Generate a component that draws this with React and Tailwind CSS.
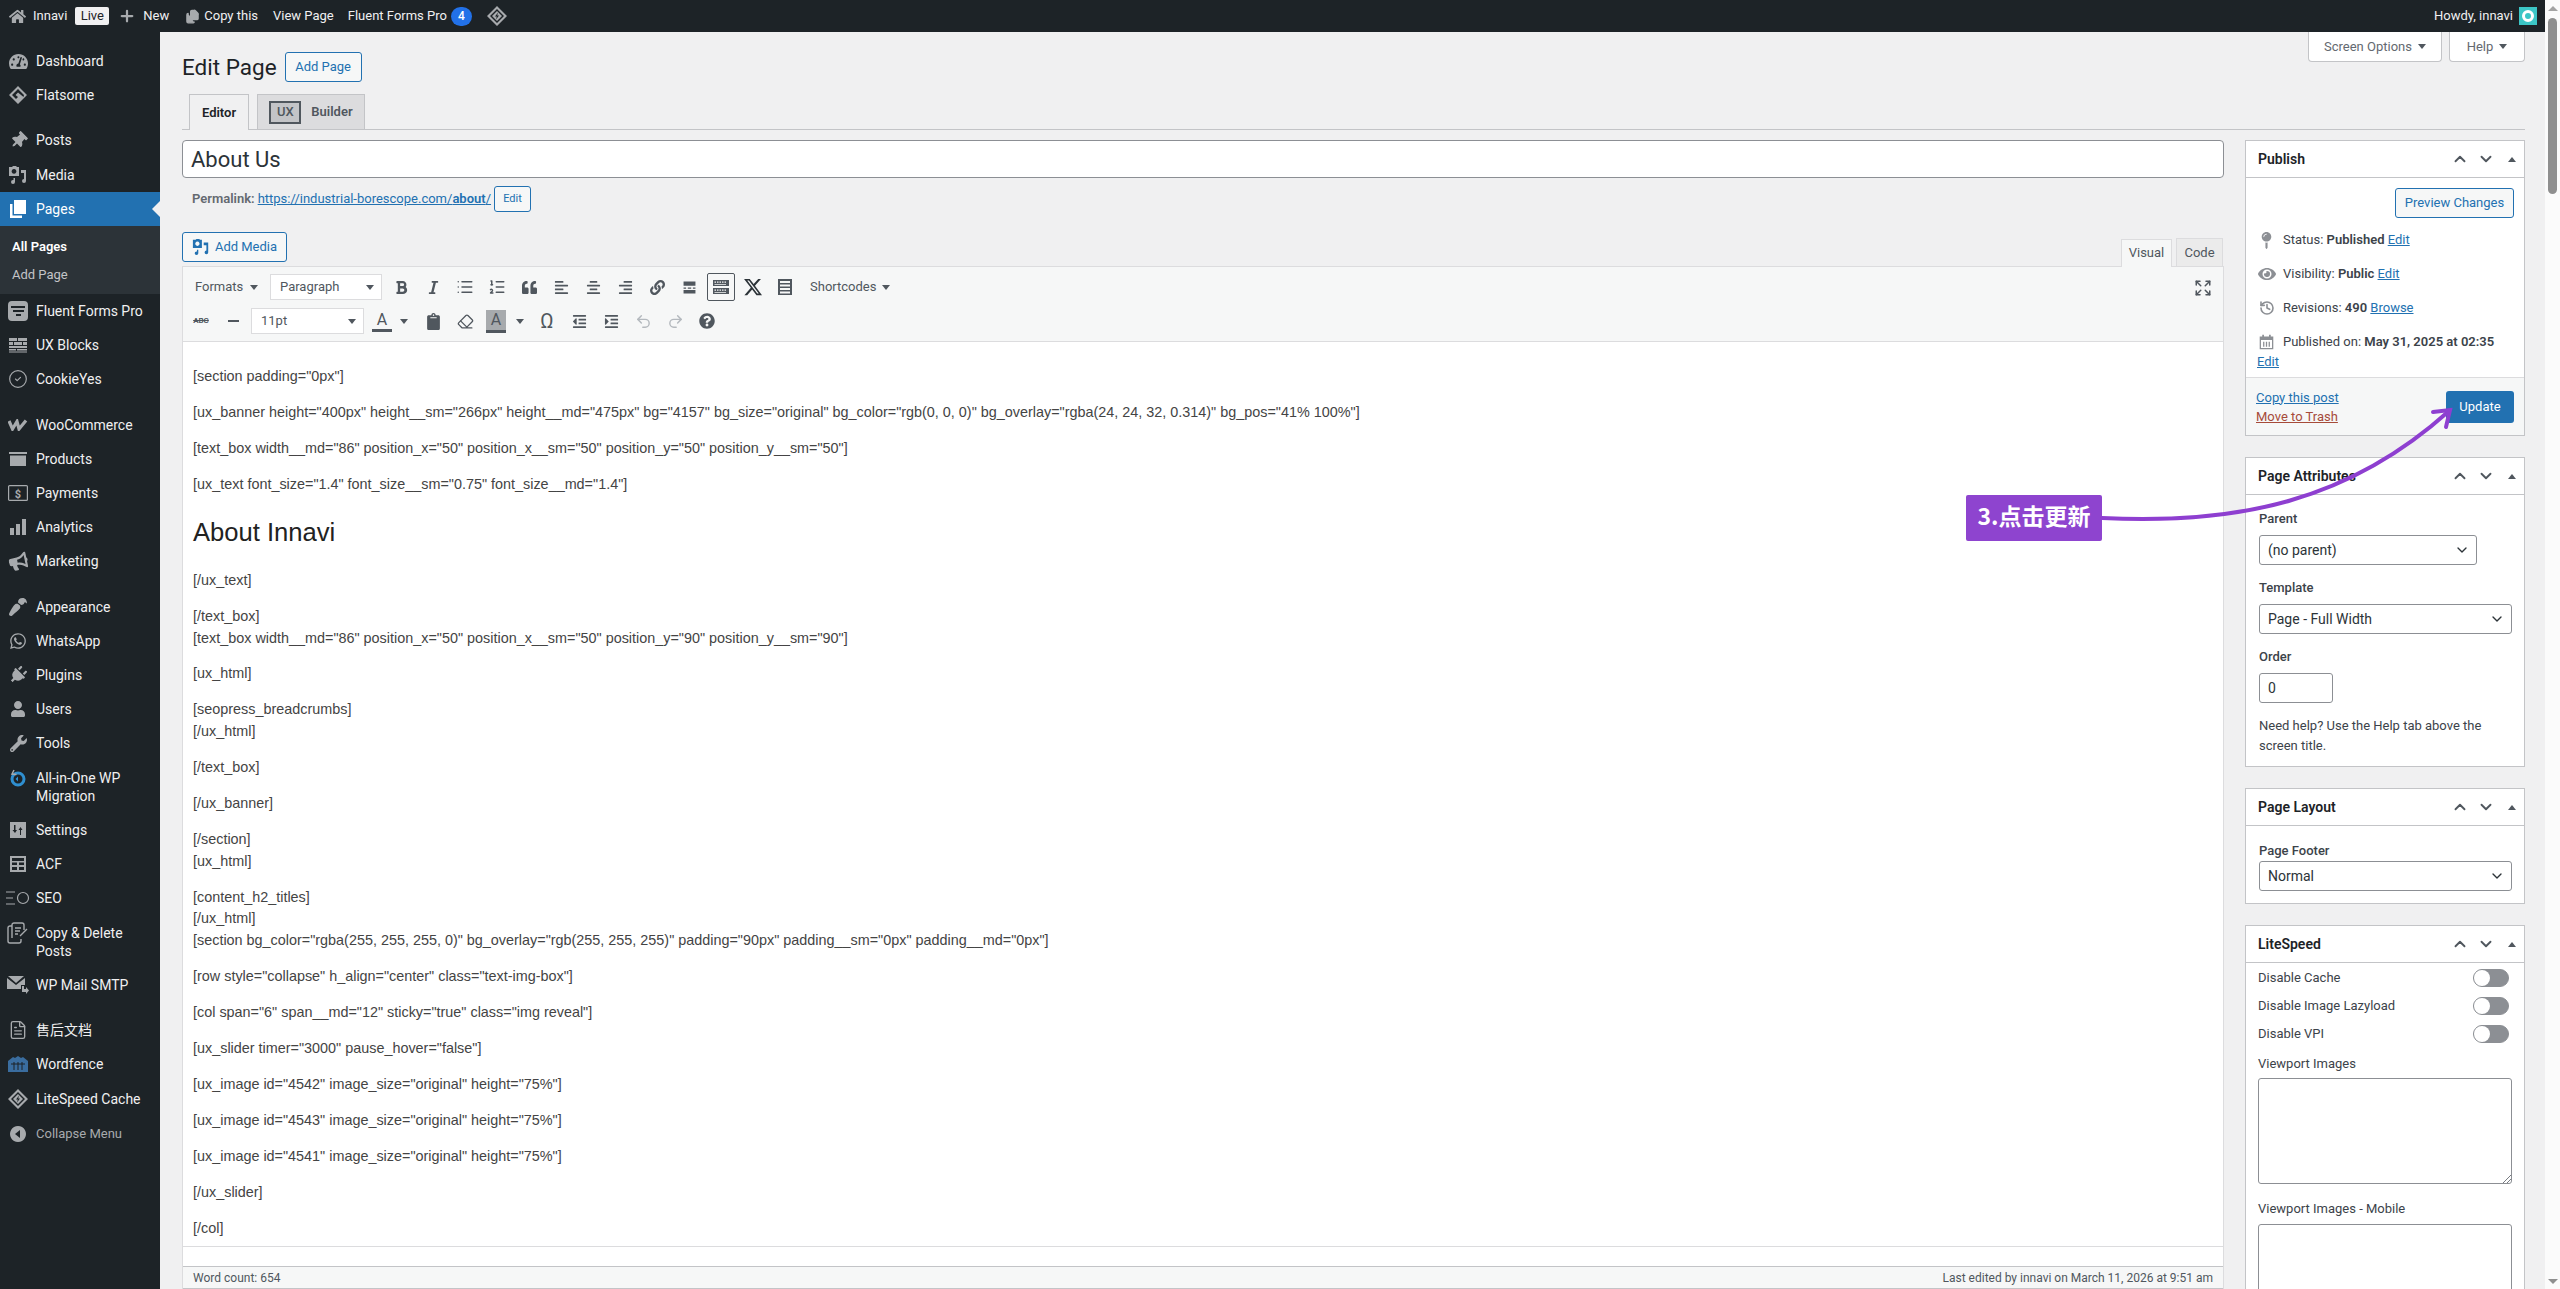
import {
  ChevronDown,
  ChevronUp,
  CircleCheck,
  Eraser,
  Expand,
  FileText,
  Files,
  History,
  List,
  ListOrdered,
  Plus,
  Redo2,
  Undo2,
} from "lucide-react";
import {
  FaAlignCenter,
  FaAlignLeft,
  FaAlignRight,
  FaBold,
  FaBullhorn,
  FaClipboard,
  FaEye,
  FaHome,
  FaIndent,
  FaItalic,
  FaLink,
  FaMapPin,
  FaOutdent,
  FaPaintBrush,
  FaPlug,
  FaQuestionCircle,
  FaQuoteLeft,
  FaTachometerAlt,
  FaThumbtack,
  FaUser,
  FaWhatsapp,
  FaWrench,
} from "react-icons/fa";
import { FaXTwitter } from "react-icons/fa6";

const sans = "font-['Roboto','Noto_Sans_CJK_SC',sans-serif]";

// sidebar icons drawn by hand, the wp dashicons are not in the packages
function Svg({ children, className = "w-5 h-5" }) {
  return (
    <svg viewBox="0 0 20 20" className={className} fill="currentColor">
      {children}
    </svg>
  );
}

const DiamondIcon = () => (
  <Svg>
    <path d="M10 1 19 10 10 19 1 10Z M10 4 4 10 8 14 10 12 7.5 10 10 7.5 15.5 12 16 10Z" fillRule="evenodd" />
  </Svg>
);
const MediaIcon = ({ className }) => (
  <Svg className={className}>
    <path
      d="M1 2h3l1-1h3l1 1h2v9H1Z M6 4a2.4 2.4 0 1 0 .01 0Z M13 5h5v11a2 2 0 1 1-2-2V8h-3Z M7 13v4a2 2 0 1 1-2-2h.5v-2Z"
      fillRule="evenodd"
    />
  </Svg>
);
const PagesIcon = () => (
  <Svg>
    <path d="M6 1h12v14H6Z" />
    <path d="M2 5h2.5v11.5H14V19H2Z" />
  </Svg>
);
const FluentIcon = () => (
  <Svg>
    <path
      d="M4 0h12a4 4 0 0 1 4 4v12a4 4 0 0 1-4 4H4a4 4 0 0 1-4-4V4a4 4 0 0 1 4-4Z M3 5v2h14V5Z M5 9v2h11V9Z M8 13v2h5v-2Z"
      fillRule="evenodd"
    />
  </Svg>
);
const BlocksIcon = () => (
  <Svg>
    <path d="M1 3h8v3H1Z M10 3h9v3h-9Z M1 7h4v3H1Z M6 7h8v3H6Z M15 7h4v3h-4Z M1 11h18v2H1Z M1 14h7v1.5H1Z M9 14h10v1.5H9Z M1 16.5h18v1H1Z" />
  </Svg>
);
const CookieIcon = () => <CircleCheck className="w-5 h-5" strokeWidth={1.4} />;
const WooIcon = () => (
  <svg viewBox="0 0 20 12" className="w-5 h-3" fill="none" stroke="currentColor" strokeWidth="3.2">
    <path d="M1 2 4.5 10 9 2.5 11 10 18 1.5" />
  </svg>
);
const ProductsIcon = () => (
  <Svg>
    <path d="M1 3h18v2H1Z M2 6.5h16V17H2Z" />
  </Svg>
);
const PaymentsIcon = () => (
  <svg viewBox="0 0 20 16" className="w-5 h-4" fill="none" stroke="currentColor" strokeWidth="1.2">
    <rect x="0.6" y="0.6" width="18.8" height="14.8" rx="1" />
    <text x="10" y="12.5" textAnchor="middle" fontSize="11" fontWeight="700" fill="currentColor" stroke="none">
      $
    </text>
  </svg>
);
const AnalyticsIcon = () => (
  <Svg>
    <path d="M2 11h4v7H2Z M8 7h4v11H8Z M14 2h4v16h-4Z" />
  </Svg>
);
const SettingsIcon = () => (
  <Svg>
    <path
      d="M2 2h16v16H2Z M6 5v5H4.5L7 13l2-3H7.5V5Z M13 15v-5h1.5L12.500 7 10.500 10H12v5Z"
      fillRule="evenodd"
    />
  </Svg>
);
const AcfIcon = () => (
  <Svg>
    <path
      d="M2 2h16v16H2Z M4 4v3h12V4Z M4 8.500v2.500h5V8.500Z M11 8.500v2.500h5V8.500Z M4 13v3h5v-3Z M11 13v3h5v-3Z"
      fillRule="evenodd"
    />
  </Svg>
);
const SeoIcon = () => (
  <svg viewBox="0 0 24 14" className="w-6 h-[14px]" fill="none" stroke="currentColor" strokeWidth="1.2">
    <path d="M0 1h9 M0 7h7 M0 13h9" />
    <circle cx="17" cy="7" r="5.500" />
  </svg>
);
const CopyPostsIcon = () => (
  <svg viewBox="0 0 22 22" className="w-[22px] h-[22px]" fill="none" stroke="currentColor" strokeWidth="1.400">
    <path d="M5 16V3a2 2 0 0 1 2-2h8a2 2 0 0 1 2 2v5" />
    <path d="M5 4H3a2 2 0 0 0-2 2v13a2 2 0 0 0 2 2h9a2 2 0 0 0 2-2v-2" />
    <path d="M8 6h6 M8 9h5 M8 12h3 M13 14l7-7" />
  </svg>
);
const MailIcon = () => (
  <svg viewBox="0 0 22 20" className="w-[22px] h-5" fill="currentColor">
    <path d="M1 1h16L9 8Z M0 3l9 7 9-7v7h-4v4H0Z" />
    <path d="M15 11h2v3h2v-2l3 3.500-3 3.500v-2h-4Z" />
  </svg>
);
const DocIcon = () => <FileText className="w-5 h-5" strokeWidth={1.6} />;
const WordfenceIcon = () => (
  <svg viewBox="0 0 20 16" className="w-5 h-4" fill="#3a6d9f">
    <path d="M0 5 5 1 7 2 10 0 13 2 15 1 20 5V16H0Z" />
    <path d="M3 8h14M6 6v8M10 6v8M14 6v8" stroke="#1d2327" strokeWidth="1" />
  </svg>
);
const LiteIcon = ({ className }) => (
  <Svg className={className}>
    <path d="M10 0 20 10 10 20 0 10Z M10 3 3 10 10 17 17 10Z" fillRule="evenodd" />
    <path d="M10 5 15 10 10 15 5 10Z M11 6.500 8 10.500h1.800L9 13.500 12 9.500h-1.800Z" fillRule="evenodd" />
  </Svg>
);
const MigrationIcon = () => (
  <svg viewBox="0 0 20 20" className="w-5 h-5" fill="none" strokeWidth="3">
    <circle cx="10" cy="11" r="6" stroke="#2f8fd0" />
    <path d="M6 2 4 6 8.500 6.500" stroke="#a7aaad" strokeWidth="1.500" />
    <path d="M10 8.500 7.500 11 10 13.500Z" fill="#2f8fd0" stroke="none" />
  </svg>
);
const CollapseIcon = () => (
  <Svg>
    <path d="M10 2a8 8 0 1 0 .01 0Z M12 6 7 10 12 14Z" fillRule="evenodd" />
  </Svg>
);

const menu = [
  { label: "Dashboard", icon: <FaTachometerAlt className="w-[19px] h-[19px]" /> },
  { label: "Flatsome", icon: <DiamondIcon /> },
  { gap: true },
  { label: "Posts", icon: <FaThumbtack className="w-[17px] h-[17px] rotate-45" /> },
  { label: "Media", icon: <MediaIcon /> },
  { label: "Pages", icon: <PagesIcon />, active: true },
  { label: "Fluent Forms Pro", icon: <FluentIcon /> },
  { label: "UX Blocks", icon: <BlocksIcon /> },
  { label: "CookieYes", icon: <CookieIcon /> },
  { gap: true },
  { label: "WooCommerce", icon: <WooIcon /> },
  { label: "Products", icon: <ProductsIcon /> },
  { label: "Payments", icon: <PaymentsIcon /> },
  { label: "Analytics", icon: <AnalyticsIcon /> },
  { label: "Marketing", icon: <FaBullhorn className="w-[19px] h-[19px] -rotate-12" /> },
  { gap: true },
  { label: "Appearance", icon: <FaPaintBrush className="w-[18px] h-[18px] rotate-180" /> },
  { label: "WhatsApp", icon: <FaWhatsapp className="w-[18px] h-[18px]" /> },
  { label: "Plugins", icon: <FaPlug className="w-[18px] h-[18px] rotate-45" /> },
  { label: "Users", icon: <FaUser className="w-4 h-4" /> },
  { label: "Tools", icon: <FaWrench className="w-[17px] h-[17px]" /> },
  { label: "All-in-One WP Migration", icon: <MigrationIcon /> },
  { label: "Settings", icon: <SettingsIcon /> },
  { label: "ACF", icon: <AcfIcon /> },
  { label: "SEO", icon: <SeoIcon /> },
  { label: "Copy & Delete Posts", icon: <CopyPostsIcon /> },
  { label: "WP Mail SMTP", icon: <MailIcon /> },
  { gap: true },
  { label: "售后文档", icon: <DocIcon /> },
  { label: "Wordfence", icon: <WordfenceIcon /> },
  { label: "LiteSpeed Cache", icon: <LiteIcon /> },
];

const lines = [
  ['[section padding="0px"]'],
  ['[ux_banner height="400px" height__sm="266px" height__md="475px" bg="4157" bg_size="original" bg_color="rgb(0, 0, 0)" bg_overlay="rgba(24, 24, 32, 0.314)" bg_pos="41% 100%"]'],
  ['[text_box width__md="86" position_x="50" position_x__sm="50" position_y="50" position_y__sm="50"]'],
  ['[ux_text font_size="1.4" font_size__sm="0.75" font_size__md="1.4"]'],
  "h2",
  ["[/ux_text]"],
  ["[/text_box]", '[text_box width__md="86" position_x="50" position_x__sm="50" position_y="90" position_y__sm="90"]'],
  ["[ux_html]"],
  ["[seopress_breadcrumbs]", "[/ux_html]"],
  ["[/text_box]"],
  ["[/ux_banner]"],
  ["[/section]", "[ux_html]"],
  ["[content_h2_titles]", "[/ux_html]", '[section bg_color="rgba(255, 255, 255, 0)" bg_overlay="rgb(255, 255, 255)" padding="90px" padding__sm="0px" padding__md="0px"]'],
  ['[row style="collapse" h_align="center" class="text-img-box"]'],
  ['[col span="6" span__md="12" sticky="true" class="img reveal"]'],
  ['[ux_slider timer="3000" pause_hover="false"]'],
  ['[ux_image id="4542" image_size="original" height="75%"]'],
  ['[ux_image id="4543" image_size="original" height="75%"]'],
  ['[ux_image id="4541" image_size="original" height="75%"]'],
  ["[/ux_slider]"],
  ["[/col]"],
];

function MenuItem({ item }) {
  if (item.gap) return <div className="h-[11px]" />;
  const colors = item.active ? "bg-[#2271b1] text-white" : "text-[#f0f0f1]";
  return (
    <div className={`relative flex items-start py-2 text-[14px] leading-[18.2px] ${colors}`}>
      <span className={`w-9 h-[18px] flex items-center justify-center shrink-0 ${item.active ? "text-white" : "text-[#a7aaad]"}`}>
        {item.icon}
      </span>
      <span className="pr-2">{item.label}</span>
      {item.active && (
        <span className="absolute right-0 top-[9px] w-0 h-0 border-y-[8px] border-y-transparent border-r-[8px] border-r-[#f0f0f1]" />
      )}
    </div>
  );
}

function Sidebar() {
  return (
    <div className="w-40 shrink-0 bg-[#1d2327] pt-3">
      {menu.map((item, i) => (
        <div key={i}>
          <MenuItem item={item} />
          {item.active && (
            <div className="bg-[#2c3338] h-[68px] pl-3 pt-[12px] text-[13px] leading-[28px]">
              <div className="font-semibold text-white leading-[18px] mb-[10px]">All Pages</div>
              <div className="text-[#c3c4c7] leading-[18px]">Add Page</div>
            </div>
          )}
        </div>
      ))}
      <div className="flex items-center py-2 text-[13px] leading-[18px] text-[#a7aaad]">
        <span className="w-9 flex justify-center">
          <CollapseIcon />
        </span>
        Collapse Menu
      </div>
    </div>
  );
}

function TopBar() {
  return (
    <div className="h-8 bg-[#1d2327] text-[#f0f0f1] text-[13px] flex items-center shrink-0">
      <FaHome className="ml-[9px] w-[17px] h-[17px] text-[#a7aaad]" />
      <span className="ml-[7px]">Innavi</span>
      <span className="ml-2 h-[18px] w-[34px] rounded-[2px] bg-[#f0f0f1] text-[#1d2327] flex items-center justify-center">Live</span>
      <Plus className="ml-[9px] w-[18px] h-[18px] text-[#a7aaad]" strokeWidth={3} />
      <span className="ml-[7px]">New</span>
      <Files className="ml-4 w-[15px] h-[15px] text-[#a7aaad]" fill="currentColor" />
      <span className="ml-[4px]">Copy this</span>
      <span className="ml-[15px]">View Page</span>
      <span className="ml-[14px]">Fluent Forms Pro</span>
      <span className="ml-1 w-[21px] h-[19px] rounded-full bg-[#2271e8] text-white text-[12px] font-medium flex items-center justify-center">4</span>
      <span className="ml-[15px] text-[#a7aaad]">
        <LiteIcon />
      </span>
      <span className="ml-auto">Howdy, innavi</span>
      <span className="ml-[6px] mr-2 w-[18px] h-[18px] bg-[#3cc6c6] flex items-center justify-center">
        <span className="w-[12px] h-[12px] rounded-full border-[3px] border-white" />
      </span>
    </div>
  );
}

function Caret({ className = "" }) {
  return <span className={`inline-block w-0 h-0 border-x-[4px] border-x-transparent border-t-[5px] border-t-[#50575e] ${className}`} />;
}

function TB({ children, active }) {
  return (
    <span className="w-8 h-7 shrink-0 flex items-center justify-center text-[#50575e]">
      {active ? <span className="w-7 h-7 border border-[#50575e] rounded-[2px] flex items-center justify-center">{children}</span> : children}
    </span>
  );
}

function ToolSelect({ label, w }) {
  return (
    <span className={`${w} h-[26px] shrink-0 bg-white border border-[#dcdcde] flex items-center justify-between pl-[9px] pr-[7px] text-[#50575e] text-[13px]`}>
      {label}
      <Caret />
    </span>
  );
}

function Toolbar() {
  const ic = "w-[15px] h-[15px]";
  return (
    <div className="h-[75px] pt-[7px] bg-[#f6f7f7] border-b border-[#dcdcde] relative text-[13px] text-[#50575e] shrink-0">
      <div className="flex items-center h-[26px] pl-3">
        <span className="w-[75px] flex items-center shrink-0">
          Formats
          <Caret className="ml-[7px]" />
        </span>
        <ToolSelect label="Paragraph" w="w-[112px]" />
        <span className="w-[3px]" />
        <TB><FaBold className="w-[13px] h-[15px]" /></TB>
        <TB><FaItalic className="w-[13px] h-[15px]" /></TB>
        <TB><List className="w-[18px] h-[18px]" strokeWidth={2} /></TB>
        <TB><ListOrdered className="w-[18px] h-[18px]" strokeWidth={2} /></TB>
        <TB><FaQuoteLeft className={ic} /></TB>
        <TB><FaAlignLeft className={ic} /></TB>
        <TB><FaAlignCenter className={ic} /></TB>
        <TB><FaAlignRight className={ic} /></TB>
        <TB><FaLink className={ic} /></TB>
        <TB>
          <Svg className="w-[17px] h-[17px]">
            <path d="M3 3h14v5H3Z M3 10h3v1.500H3Z M8 10h4v1.500H8Z M14 10h3v1.500h-3Z M3 13h14v4H3Z" />
          </Svg>
        </TB>
        <TB active>
          <Svg className="w-[20px] h-[20px]">
            <path
              d="M2 3h16v6H2Z M3.500 4.500v1.200h1.500V4.500Z M6 4.500v1.200h1.500V4.500Z M8.500 4.500v1.200H10V4.500Z M11 4.500v1.200h1.500V4.500Z M13.500 4.500v1.200H15V4.500Z M3.500 7v.8H15V7Z M2 11h16v6H2Z M3.500 12.500v1.200h1.500V12.500Z M6 12.500v1.200h1.500V12.500Z M8.500 12.500v1.200H10V12.500Z M11 12.500v1.200h1.500V12.500Z M13.500 12.500v1.200H15V12.500Z M3.500 15v.8H15V15Z"
              fillRule="evenodd"
            />
          </Svg>
        </TB>
        <TB><FaXTwitter className="w-[20px] h-[20px] text-[#2c3338]" /></TB>
        <TB>
          <Svg className="w-5 h-5">
            <path d="M3 2h14v16H3Z M5 4v2h10V4Z M5 7.500v2h10v-2Z M5 11v2h10v-2Z M5 14.500v2h10v-2Z" fillRule="evenodd" />
          </Svg>
        </TB>
        <span className="ml-[9px] flex items-center">
          Shortcodes
          <Caret className="ml-[6px]" />
        </span>
      </div>
      <div className="flex items-center h-[26px] mt-2 pl-[2px]">
        <TB><span className="text-[8px] font-bold line-through">ABC</span></TB>
        <TB><span className="w-[11px] h-[2px] bg-[#50575e]" /></TB>
        <span className="w-[2px]" />
        <ToolSelect label="11pt" w="w-[113px]" />
        <span className="w-[2px]" />
        <span className="w-[51px] flex items-center shrink-0">
          <span className="ml-[6px] w-5 text-[16px] leading-[19px] text-center border-b-[3px] border-[#50575e]">A</span>
          <Caret className="ml-[8px]" />
        </span>
        <TB><FaClipboard className="w-[15px] h-[17px]" /></TB>
        <TB><Eraser className="w-[17px] h-[17px]" strokeWidth={1.8} /></TB>
        <span className="w-[50px] flex items-center shrink-0">
          <span className="ml-[5px] w-5 text-[16px] leading-[20px] text-center bg-[#a7aaad] border-b-[3px] border-[#50575e]">A</span>
          <Caret className="ml-[10px]" />
        </span>
        <TB><span className="text-[20px] leading-none">Ω</span></TB>
        <TB><FaOutdent className={ic} /></TB>
        <TB><FaIndent className={ic} /></TB>
        <TB><Undo2 className="w-[17px] h-[17px] text-[#b4b9be]" /></TB>
        <TB><Redo2 className="w-[17px] h-[17px] text-[#b4b9be]" /></TB>
        <TB><FaQuestionCircle className="w-4 h-4" /></TB>
      </div>
      <Expand className="absolute right-[11px] top-[12px] w-[18px] h-[18px]" strokeWidth={2} />
    </div>
  );
}

function EditorContent() {
  return (
    <div className="h-[904px] overflow-hidden bg-white px-[10px] pt-6 font-['Liberation_Sans',sans-serif] text-[14.4px] leading-[21.6px] text-[#444]">
      {lines.map((l, i) =>
        l === "h2" ? (
          <h2 key={i} className="text-[25.6px] leading-[45.6px] text-[#222] mb-[14.4px]">About Innavi</h2>
        ) : (
          <p key={i} className="mb-[14.4px]">
            {l.map((t, j) => (
              <span key={j} className="block">{t}</span>
            ))}
          </p>
        )
      )}
    </div>
  );
}

function MetaBox({ title, children, className = "" }) {
  return (
    <div className={`bg-white border border-[#c3c4c7] mb-[21px] ${className}`}>
      <div className="h-[37px] border-b border-[#c3c4c7] flex items-center pl-3 text-[14px] font-semibold text-[#1d2327]">
        {title}
        <ChevronUp className="ml-auto w-[18px] h-[18px] text-[#50575e]" strokeWidth={2.500} />
        <ChevronDown className="ml-2 w-[18px] h-[18px] text-[#50575e]" strokeWidth={2.500} />
        <span className="ml-[13px] mr-[8px] w-0 h-0 border-x-[4px] border-x-transparent border-b-[5px] border-b-[#50575e]" />
      </div>
      {children}
    </div>
  );
}

function Sel({ label, w = "w-full" }) {
  return (
    <div className={`${w} h-[30px] border border-[#8c8f94] rounded-[3px] bg-white flex items-center justify-between pl-2 pr-[6px] text-[14px] text-[#2c3338]`}>
      {label}
      <ChevronDown className="w-4 h-4 text-[#2c3338]" strokeWidth={2} />
    </div>
  );
}

function Toggle({ label }) {
  return (
    <div className="h-[28px] flex items-center justify-between pr-[3px]">
      {label}
      <span className="w-9 h-[18px] rounded-full bg-[#8c8f94] border border-[#8c8f94] flex items-center">
        <span className="w-4 h-4 rounded-full bg-white" />
      </span>
    </div>
  );
}

function PublishRow({ icon, children }) {
  return (
    <div className="flex items-center h-[34px]">
      <span className="w-[26px] shrink-0 text-[#8c8f94] flex justify-center pr-[7px]">{icon}</span>
      <span>{children}</span>
    </div>
  );
}

function SidePanel() {
  const linkC = "text-[#2271b1] underline";
  return (
    <div className="w-[280px] shrink-0 text-[13px] text-[#3c434a]">
      <MetaBox title="Publish">
        <div className="flex justify-end pt-[10px] pr-[10px]">
          <span className="h-[30px] w-[119px] border border-[#2271b1] rounded-[3px] bg-[#f6f7f7] text-[#2271b1] flex items-center justify-center">Preview Changes</span>
        </div>
        <div className="pl-[11px] pt-[5px]">
          <PublishRow icon={<FaMapPin className="w-[15px] h-[17px]" />}>
            Status: <b className="font-semibold">Published</b> <span className={linkC}>Edit</span>
          </PublishRow>
          <PublishRow icon={<FaEye className="w-[18px] h-[18px]" />}>
            Visibility: <b className="font-semibold">Public</b> <span className={linkC}>Edit</span>
          </PublishRow>
          <PublishRow icon={<History className="w-4 h-4" strokeWidth={2.4} />}>
            Revisions: <b className="font-semibold">490</b> <span className={linkC}>Browse</span>
          </PublishRow>
          <PublishRow
            icon={
              <Svg className="w-[17px] h-[17px]">
                <path d="M2 3h3V1h2v2h6V1h2v2h3v15H2Z M3.500 7v9.500h13V7Z M6 9h1.500v6H6Z M9.250 9h1.500v6h-1.500Z M12.500 9H14v6h-1.500Z" fillRule="evenodd" />
              </Svg>
            }
          >
            Published on: <b className="font-semibold">May 31, 2025 at 02:35</b>
          </PublishRow>
          <div className={`${linkC} -mt-[6px] pb-[6px] leading-[18px]`}>Edit</div>
        </div>
        <div className="h-[58px] bg-[#f6f7f7] border-t border-[#dcdcde] flex items-center justify-between pl-[10px] pr-[10px]">
          <div className="leading-[19px]">
            <div className={linkC}>Copy this post</div>
            <div className="text-[#a64b3a] underline">Move to Trash</div>
          </div>
          <span className="w-[68px] h-8 rounded-[3px] bg-[#2271b1] text-white flex items-center justify-center">Update</span>
        </div>
      </MetaBox>

      <MetaBox title="Page Attributes">
        <div className="px-[13px] pt-[14px] pb-[10px]">
          <div className="font-medium h-[26px] leading-[20px]">Parent</div>
          <Sel label="(no parent)" w="w-[218px]" />
          <div className="font-medium mt-[13px] h-[26px] leading-[20px]">Template</div>
          <Sel label="Page - Full Width" w="w-[253px]" />
          <div className="font-medium mt-[13px] h-[26px] leading-[20px]">Order</div>
          <div className="w-[74px] h-[30px] border border-[#8c8f94] rounded-[3px] bg-white flex items-center pl-2 text-[14px] text-[#2c3338]">0</div>
          <p className="mt-[13px] leading-[20px] w-[250px]">Need help? Use the Help tab above the screen title.</p>
        </div>
      </MetaBox>

      <MetaBox title="Page Layout">
        <div className="px-[13px] pt-[16px] pb-[12px]">
          <div className="h-[19px] leading-[18px] font-medium">Page Footer</div>
          <Sel label="Normal" w="w-[253px]" />
        </div>
      </MetaBox>

      <MetaBox title="LiteSpeed" className="h-[600px]">
        <div className="px-3 pt-[1px]">
          <Toggle label="Disable Cache" />
          <Toggle label="Disable Image Lazyload" />
          <Toggle label="Disable VPI" />
          <div className="mt-[6px] h-[24px] leading-[20px]">Viewport Images</div>
          <div className="relative h-[106px] border border-[#8c8f94] rounded-[3px] bg-white">
            <svg viewBox="0 0 8 8" className="absolute right-0 bottom-0 w-2 h-2" stroke="#787c82" strokeWidth="1">
              <path d="M8 0 0 8 M8 4 4 8" />
            </svg>
          </div>
          <div className="mt-[15px] h-[25px] leading-[20px]">Viewport Images - Mobile</div>
          <div className="h-[106px] border border-[#8c8f94] rounded-[3px] bg-white" />
        </div>
      </MetaBox>
    </div>
  );
}

function Main() {
  return (
    <div className="relative flex-1 min-w-0 pl-[22px] pr-5 text-[#1d2327]">
      <div className="flex items-start h-[50px]">
        <div className="flex items-center mt-5">
          <h1 className="text-[22.5px] leading-[30px]">Edit Page</h1>
          <span className="ml-[8px] w-[77px] h-[30px] border border-[#2271b1] rounded-[3px] bg-[#f6f7f7] text-[13px] text-[#2271b1] flex items-center justify-center">Add Page</span>
        </div>
        <div className="ml-auto flex gap-[7px] text-[13px] text-[#646970]">
          <span className="w-[134px] h-[30px] bg-white border border-t-0 border-[#c3c4c7] rounded-b-[4px] flex items-center justify-center gap-[6px]">
            Screen Options <Caret />
          </span>
          <span className="w-[76px] h-[30px] bg-white border border-t-0 border-[#c3c4c7] rounded-b-[4px] flex items-center justify-center gap-[6px]">
            Help <Caret />
          </span>
        </div>
      </div>

      <div className="mt-3 h-[36px] border-b border-[#c3c4c7] flex items-end pl-[7px] gap-2 text-[13px] font-semibold">
        <span className="w-[60px] h-[36px] -mb-px bg-[#f0f0f1] border border-b-0 border-[#c3c4c7] flex items-center justify-center text-[#1d2327]">Editor</span>
        <span className="w-[108px] h-[35px] bg-[#dcdcde] border border-b-0 border-[#c3c4c7] flex items-center justify-center gap-[10px] text-[#50575e]">
          <span className="w-8 h-[23px] border-2 border-[#50575e] bg-[#c3c4c7] flex items-center justify-center font-medium">UX</span>
          Builder
        </span>
      </div>

      <div className="flex gap-[21px] pt-[10px]">
        <div className="flex-1 min-w-0">
          <div className="h-[38px] bg-white border border-[#8c8f94] rounded-[4px] flex items-center pl-2 text-[22px] text-[#2c3338]">About Us</div>
          <div className="mt-2 h-[26px] pl-[10px] flex items-center text-[13px] text-[#646970]">
            <b className="font-semibold">Permalink:</b>
            <span className="ml-[3px] text-[#2271b1] underline">
              https://industrial-borescope.com/<b className="font-semibold">about</b>/
            </span>
            <span className="ml-[3px] w-[37px] h-[26px] border border-[#2271b1] rounded-[3px] bg-[#f6f7f7] text-[11px] text-[#2271b1] flex items-center justify-center">Edit</span>
          </div>

          <div className="mt-5 h-[34px] flex items-start justify-between">
            <span className="w-[105px] h-[30px] border border-[#2271b1] rounded-[3px] bg-[#f6f7f7] text-[13px] text-[#2271b1] flex items-center justify-center gap-[5px]">
              <MediaIcon className="w-[18px] h-[18px]" />
              Add Media
            </span>
            <div className="flex items-end h-[34px] gap-[4px] pr-[1px] text-[13px] text-[#50575e]">
              <span className="w-[51px] h-[28px] -mb-px bg-[#f6f7f7] border border-b-0 border-[#dcdcde] flex items-center justify-center pb-[2px]">Visual</span>
              <span className="w-[47px] h-[28px] bg-[#ebebeb] border border-b-0 border-[#dcdcde] flex items-center justify-center">Code</span>
            </div>
          </div>

          <div className="border border-[#dcdcde] bg-white">
            <Toolbar />
            <EditorContent />
            <div className="h-[20px] border-t border-[#dcdcde]" />
            <div className="h-[23px] border-y border-[#c3c4c7] bg-[#f6f7f7] flex items-center justify-between pl-[10px] pr-[10px] text-[12px] text-[#50575e]">
              <span>Word count: 654</span>
              <span>Last edited by innavi on March 11, 2026 at 9:51 am</span>
            </div>
          </div>
        </div>
        <SidePanel />
      </div>
    </div>
  );
}

function Annotation() {
  return (
    <>
      <div className="absolute left-[1966px] top-[495px] w-[136px] h-[46px] rounded-[2px] bg-[#8e44cf] text-white text-[23px] font-bold flex items-center justify-center pb-[6px] font-['Noto_Sans_CJK_SC',sans-serif]">
        3.点击更新
      </div>
      <svg className="absolute left-0 top-0 w-[2560px] h-[1289px] pointer-events-none" viewBox="0 0 2560 1289" fill="none" stroke="#8e3fd0" strokeWidth="4" strokeLinecap="round">
        <path d="M2102 518C2240 525 2350 500 2449 411" />
        <path d="M2433 412 2450 410 2446 427" />
      </svg>
    </>
  );
}

function Scrollbar() {
  return (
    <div className="w-[15px] shrink-0 bg-[#fbfbfb] flex flex-col items-center relative">
      <span className="mt-[6px] w-0 h-0 border-x-[5px] border-x-transparent border-b-[5px] border-b-[#a3a3a3]" />
      <span className="mt-[7px] w-[9px] h-[176px] rounded-full bg-[#8f8f8f]" />
      <span className="mt-auto mb-[5px] w-0 h-0 border-x-[5px] border-x-transparent border-t-[5px] border-t-[#8f8f8f]" />
    </div>
  );
}

export default function App() {
  return (
    <div className={`relative flex h-screen w-screen overflow-hidden bg-[#f0f0f1] ${sans}`}>
      <div className="flex-1 min-w-0 flex flex-col">
        <TopBar />
        <div className="flex flex-1 min-h-0">
          <Sidebar />
          <Main />
        </div>
      </div>
      <Scrollbar />
      <Annotation />
    </div>
  );
}
